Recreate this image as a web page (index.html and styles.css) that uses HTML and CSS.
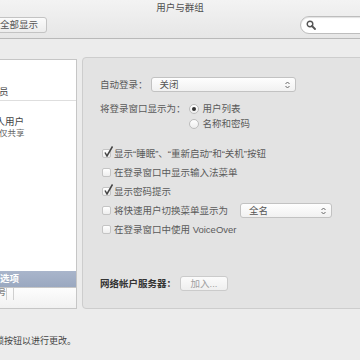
FILE: index.html
```html
<!DOCTYPE html>
<html lang="zh-CN">
<head>
    <meta charset="UTF-8">
    <meta name="viewport" content="width=device-width, initial-scale=1.0">
    <title>用户与群组</title>
    <link rel="stylesheet" href="styles.css">
</head>
<body>
    <!-- Window toolbar -->
    <header class="toolbar">
        <div class="title">用户与群组</div>
        <div class="tools">
            <button class="show-all">全部显示</button>
            <div class="search">
                <svg class="search-icon" width="10" height="10" viewBox="0 0 10 10">
                    <circle cx="4" cy="4" r="2.8" fill="none" stroke="#555" stroke-width="1.4"/>
                    <path d="M6 6 L9 9" stroke="#555" stroke-width="1.8" stroke-linecap="round"/>
                </svg>
            </div>
        </div>
    </header>

    <main class="main">
        <!-- User list -->
        <aside class="sidebar">
            <div class="list">
                <div class="item current">
                    <span class="sub">管理员</span>
                </div>
                <div class="item guest">
                    <span class="name">客人用户</span>
                    <span class="sub">仅共享</span>
                </div>
                <div class="item login selected">登录选项</div>
            </div>
            <div class="list-bar">
                <span class="bar-btn">号</span>
                <span class="bar-btn"></span>
            </div>
        </aside>

        <!-- Login options -->
        <section class="panel">
            <div class="row">
                <span class="label">自动登录：</span>
                <div class="popup wide">
                    <span>关闭</span>
                    <svg class="arrows" width="5" height="8" viewBox="0 0 5 8">
                        <path d="M0.5 3 L2.5 1 L4.5 3 M0.5 5 L2.5 7 L4.5 5" fill="none" stroke="#666" stroke-width="1"/>
                    </svg>
                </div>
            </div>

            <div class="row display">
                <span class="label">将登录窗口显示为：</span>
                <div class="radios">
                    <label class="radio-row"><span class="radio on"></span>用户列表</label>
                    <label class="radio-row"><span class="radio"></span>名称和密码</label>
                </div>
            </div>

            <div class="checks">
                <div class="check-row"><span class="box checked"></span>显示“睡眠”、“重新启动”和“关机”按钮</div>
                <div class="check-row"><span class="box"></span>在登录窗口中显示输入法菜单</div>
                <div class="check-row"><span class="box checked"></span>显示密码提示</div>
                <div class="check-row">
                    <span class="box"></span>将快速用户切换菜单显示为
                    <div class="popup small">
                        <span>全名</span>
                        <svg class="arrows" width="5" height="8" viewBox="0 0 5 8">
                            <path d="M0.5 3 L2.5 1 L4.5 3 M0.5 5 L2.5 7 L4.5 5" fill="none" stroke="#666" stroke-width="1"/>
                        </svg>
                    </div>
                </div>
                <div class="check-row"><span class="box"></span>在登录窗口中使用 VoiceOver</div>
            </div>

            <div class="row network">
                <span class="label strong">网络帐户服务器：</span>
                <button class="join">加入...</button>
            </div>
        </section>
    </main>

    <footer class="lock-note">点按锁按钮以进行更改。</footer>
</body>
</html>
```

FILE: styles.css
```css
* {
    margin: 0;
    padding: 0;
    box-sizing: border-box;
}

body {
    width: 360px;
    height: 360px;
    overflow: hidden;
    background: #ececec;
    color: #5a5a5a;
    font-family: "Liberation Sans", "Noto Sans CJK SC", sans-serif;
    font-size: 9.5px;
    line-height: 1;
}

/* Toolbar */
.toolbar {
    height: 39px;
    background: linear-gradient(#f3f3f3, #e6e6e6);
    border-bottom: 1px solid #b9b9b9;
}

.title {
    height: 15px;
    padding-top: 3px;
    text-align: center;
    color: #4f4f4f;
}

.tools {
    display: flex;
    justify-content: space-between;
    align-items: center;
    margin-top: 1px;
}

.show-all {
    height: 16px;
    margin-left: -22px;
    padding: 0 8px 0 21px;
    font: inherit;
    color: #555;
    background: linear-gradient(#fbfbfb, #ececec);
    border: 1px solid #c3c3c3;
    border-radius: 3px;
}

.search {
    width: 72px;
    height: 18px;
    margin-right: -12px;
    display: flex;
    align-items: center;
    padding-left: 5px;
    background: #fff;
    border: 1px solid #bdbdbd;
    border-radius: 9px;
    box-shadow: inset 0 1px 1px rgba(0, 0, 0, 0.12);
}

/* Main area */
.main {
    display: flex;
    gap: 5px;
    padding-top: 18px;
    height: 270px;
}

.sidebar {
    width: 77px;
    height: 250px;
    margin-top: 2px;
    display: flex;
    flex-direction: column;
    border: 1px solid #c6c6c6;
    border-left: none;
    background: #fff;
    overflow: hidden;
}

.list {
    flex: 1;
    display: flex;
    flex-direction: column;
}

.item {
    display: flex;
    flex-direction: column;
    justify-content: flex-end;
    margin-left: -20px;
    color: #444;
    white-space: nowrap;
}

.item.current {
    height: 41px;
    padding-bottom: 4px;
    margin-left: 0;
    border-bottom: 1px solid #dedede;
}

.item.current .sub {
    margin-left: -20px;
    font-size: 9.5px;
    color: #444;
}

.item.guest {
    justify-content: flex-start;
    padding-top: 16px;
    margin-left: -14px;
    gap: 2px;
}

.item .sub {
    color: #666;
    font-size: 8.5px;
}

.item.guest .sub {
    margin-left: 13px;
}

.item.login {
    margin-top: auto;
    height: 16px;
    justify-content: center;
    margin-left: -19px;
}

.selected {
    background: linear-gradient(#a9b5cb, #9aa8c0);
    color: #fff;
    font-weight: bold;
}

.list-bar {
    height: 21px;
    display: flex;
    background: linear-gradient(#fdfdfd, #f1f1f1);
    border-top: 1px solid #c6c6c6;
}

.bar-btn {
    width: 7px;
    height: 12px;
    padding-top: 1px;
    font-size: 8px;
    color: #555;
    border-right: 1px solid #cfcfcf;
    overflow: hidden;
    direction: rtl;
}

/* Options panel */
.panel {
    flex: 1;
    height: 252px;
    margin-right: -10px;
    padding: 19px 0 0 17px;
    background: #e3e3e3;
    border: 1px solid #cdcdcd;
    border-radius: 4px;
}

.row {
    display: flex;
    align-items: center;
    gap: 3px;
}

.label {
    white-space: nowrap;
}

.strong {
    font-weight: bold;
    color: #333;
}

.popup {
    height: 15px;
    display: flex;
    align-items: center;
    justify-content: space-between;
    padding: 0 5px 0 8px;
    color: #555;
    background: linear-gradient(#fefefe, #f1f1f1);
    border: 1px solid #c2c2c2;
    border-radius: 3px;
}

.popup.wide {
    width: 145px;
}

.popup.small {
    width: 92px;
    margin-left: 9px;
}

.display {
    align-items: flex-start;
    margin-top: 9px;
    gap: 3px;
}

.display .label {
    margin-top: 3px;
}

.radios {
    display: flex;
    flex-direction: column;
}

.radio-row {
    height: 15px;
    display: flex;
    align-items: center;
    gap: 4px;
}

.radio {
    width: 10px;
    height: 10px;
    border-radius: 50%;
    border: 1px solid #bdbdbd;
    background: linear-gradient(#fff, #ededed);
    display: flex;
    align-items: center;
    justify-content: center;
}

.radio.on::after {
    content: "";
    width: 4px;
    height: 4px;
    border-radius: 50%;
    background: #333;
}

.checks {
    margin-top: 13px;
    margin-left: 2px;
}

.check-row {
    height: 19px;
    display: flex;
    align-items: center;
    gap: 3px;
    white-space: nowrap;
}

.box {
    position: relative;
    width: 9px;
    height: 9px;
    border: 1px solid #c4c4c4;
    border-radius: 2px;
    background: linear-gradient(#fff, #eeeeee);
}

.box.checked::after {
    content: "";
    position: absolute;
    left: 1px;
    top: -4px;
    width: 9px;
    height: 11px;
    background: url("data:image/svg+xml,%3Csvg xmlns='http://www.w3.org/2000/svg' width='9' height='11' viewBox='0 0 9 11'%3E%3Cpath d='M1 6.5 L3 10 L8.5 0.5' fill='none' stroke='%23444' stroke-width='1.5'/%3E%3C/svg%3E") no-repeat;
}

.network {
    margin-top: 37px;
    gap: 4px;
}

.join {
    width: 48px;
    height: 15px;
    font: inherit;
    color: #a0a0a0;
    background: linear-gradient(#fbfbfb, #efefef);
    border: 1px solid #cbcbcb;
    border-radius: 3px;
}

/* Lock note */
.lock-note {
    margin: 28px 0 0 -23px;
    white-space: nowrap;
    font-size: 9px;
    color: #444;
}
```
